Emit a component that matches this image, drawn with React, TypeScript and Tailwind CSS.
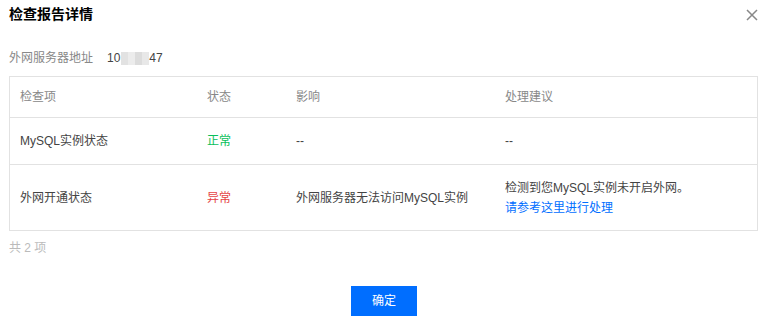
import React from "react";

const font = { fontFamily: '"Liberation Sans", "Noto Sans CJK SC", sans-serif' };

export default function App() {
  return (
    <div className="w-[766px] h-[321px] bg-white relative text-[12px] text-[#444]" style={font}>
      <div className="flex items-center justify-between pl-[9px] pr-[8px] h-[29px]">
        <div className="text-[14px] font-bold text-black">检查报告详情</div>
        <svg width="12" height="12" viewBox="0 0 12 12">
          <path d="M1 1 L11 11 M11 1 L1 11" stroke="#888" strokeWidth="1.5" />
        </svg>
      </div>
      <div className="flex items-center pl-[9px] mt-[20px] h-[18px]">
        <span className="text-[#888] w-[98px]">外网服务器地址</span>
        <span className="text-[#444]">10</span>
        <span className="inline-flex w-[28px] h-[13px] ml-[1px]">
          <span className="w-[7px] h-full bg-[#e2e2e2]" />
          <span className="w-[7px] h-full bg-[#ececec]" />
          <span className="w-[7px] h-full bg-[#dcdcdc]" />
          <span className="w-[7px] h-full bg-[#e8e8e8]" />
        </span>
        <span className="text-[#444]">47</span>
      </div>
      <div className="mx-[9px] mt-[9px] border border-[#e2e2e2] w-[749px]">
        <div className="flex h-[41px] items-center text-[#888] border-b border-[#e2e2e2]">
          <div className="w-[197px] pl-[10px]">检查项</div>
          <div className="w-[89px]">状态</div>
          <div className="w-[209px]">影响</div>
          <div className="flex-1">处理建议</div>
        </div>
        <div className="flex h-[47px] items-center border-b border-[#e2e2e2]">
          <div className="w-[197px] pl-[10px]">MySQL实例状态</div>
          <div className="w-[89px] text-[#0abf5b]">正常</div>
          <div className="w-[209px]">--</div>
          <div className="flex-1">--</div>
        </div>
        <div className="flex h-[65px] items-center">
          <div className="w-[197px] pl-[10px]">外网开通状态</div>
          <div className="w-[89px] text-[#e54545]">异常</div>
          <div className="w-[209px]">外网服务器无法访问MySQL实例</div>
          <div className="flex-1 leading-[20px]">
            <div>检测到您MySQL实例未开启外网。</div>
            <div className="text-[#006eff]">请参考这里进行处理</div>
          </div>
        </div>
      </div>
      <div className="pl-[9px] mt-[8px] text-[#bbb] h-[18px] leading-[18px]">共 2 项</div>
      <div className="flex justify-center mt-[29px] pl-[2px]">
        <button className="w-[66px] h-[30px] bg-[#006eff] text-white text-[12px] flex items-center justify-center">确定</button>
      </div>
    </div>
  );
}
